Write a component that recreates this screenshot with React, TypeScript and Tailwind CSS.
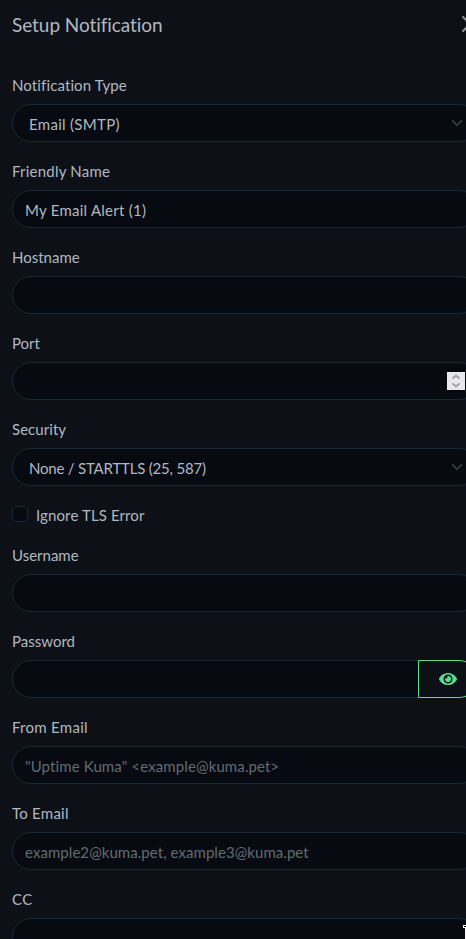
import type { ReactNode } from "react";

const field = "h-[38px] w-full rounded-[19px] border border-[#1d2634] bg-[#070a10] flex items-center";

function Field({ label, ls, children }: { label: string; ls: string; children?: ReactNode }) {
  return (
    <div className="mb-4">
      <div className="mb-2 h-6 leading-[26px]">
        <span className={ls}>{label}</span>
      </div>
      {children}
    </div>
  );
}

function Chevron() {
  return (
    <svg viewBox="0 0 16 16" className="ml-auto mr-[14px] h-3 w-3 shrink-0" fill="none" stroke="#3d434a" strokeWidth="2" strokeLinecap="round" strokeLinejoin="round">
      <path d="m2 5 6 6 6-6" />
    </svg>
  );
}

export default function App() {
  return (
    <div className="relative h-[939px] w-[466px] overflow-hidden bg-[#0d1117] font-['Lato','Liberation_Sans',sans-serif] text-[15px] text-[#b1b8c0] [font-variant-ligatures:none]">
      <div className="w-[490px] px-3">
        <header className="flex h-[72px] items-start justify-between pt-[10px]">
          <h5 className="text-[19px] leading-[29px] tracking-[-0.06px]">Setup Notification</h5>
          <svg viewBox="0 0 16 16" className="mt-[6px] h-4 w-4 shrink-0" fill="#909090">
            <path d="M.293.293a1 1 0 0 1 1.414 0L8 6.586 14.293.293a1 1 0 1 1 1.414 1.414L9.414 8l6.293 6.293a1 1 0 0 1-1.414 1.414L8 9.414l-6.293 6.293a1 1 0 0 1-1.414-1.414L6.586 8 .293 1.707a1 1 0 0 1 0-1.414z" />
          </svg>
        </header>

        <Field label="Notification Type" ls="tracking-[0.12px]">
          <div className={field + " pl-4"}>
            <span className="pt-[2px] tracking-[0.3px]">Email (SMTP)</span>
            <Chevron />
          </div>
        </Field>
        <Field label="Friendly Name" ls="tracking-[0.22px]">
          <div className={field + " pl-3"}>
            <span className="pt-[2px] tracking-[0.25px]">My Email Alert (1)</span>
          </div>
        </Field>
        <Field label="Hostname" ls="tracking-normal">
          <div className={field} />
        </Field>
        <Field label="Port" ls="tracking-normal">
          <div className={field + " justify-end pr-3"}>
            <svg viewBox="0 0 18 18" className="h-[18px] w-[18px]" fill="none" stroke="#8e8e98" strokeWidth="1.6">
              <path d="M0 0h18v18H0z" fill="#e9e9ed" stroke="none" />
              <path d="m5.5 6.5 3.5-3 3.5 3M5.5 11.500l3.500 3 3.500-3" />
            </svg>
          </div>
        </Field>
        <Field label="Security" ls="tracking-[0.05px]">
          <div className={field + " pl-4"}>
            <span className="pt-[2px] tracking-[-0.2px]">None / STARTTLS (25, 587)</span>
            <Chevron />
          </div>
        </Field>

        <div className="mb-4 flex h-6 items-start">
          <div className="mt-1 h-4 w-4 rounded-[4px] border border-[#1d2634] bg-[#070a10]" />
          <span className="ml-2 leading-[26px] tracking-[0.12px]">Ignore TLS Error</span>
        </div>

        <Field label="Username" ls="tracking-normal">
          <div className={field} />
        </Field>
        <Field label="Password" ls="tracking-normal">
          <div className="flex h-[38px]">
            <div className="flex-1 rounded-l-[19px] border border-r-0 border-[#1d2634] bg-[#070a10]" />
            <div className="flex w-[60px] items-center justify-center rounded-r-[19px] border border-[#5cdd8b]">
              <svg viewBox="0 0 576 512" className="h-4 w-[18px]" fill="#5cdd8b">
                <path d="M572.52 241.400C518.290 135.590 410.930 64 288 64S57.680 135.640 3.480 241.410a32.350 32.350 0 0 0 0 29.190C57.710 376.410 165.070 448 288 448s230.320-71.640 284.520-177.410a32.350 32.350 0 0 0 0-29.190zM288 400a144 144 0 1 1 144-144 143.930 143.930 0 0 1-144 144zm0-240a95.310 95.310 0 0 0-25.310 3.790 47.850 47.850 0 0 1-66.900 66.900A95.780 95.780 0 1 0 288 160z" />
              </svg>
            </div>
          </div>
        </Field>
        <Field label="From Email" ls="tracking-[0.28px]">
          <div className={field + " pl-3 text-[#636b73]"}>
            <span className="pt-[2px] tracking-[0.12px]">"Uptime Kuma" &lt;example@kuma.pet&gt;</span>
          </div>
        </Field>
        <Field label="To Email" ls="tracking-[0.25px]">
          <div className={field + " pl-3 text-[#636b73]"}>
            <span className="pt-[2px] tracking-[0.06px]">example2@kuma.pet, example3@kuma.pet</span>
          </div>
        </Field>
        <Field label="CC" ls="tracking-[0.5px]">
          <div className={field} />
        </Field>
      </div>

      {/* Mouse pointer, clipped by the window's edge */}
      <svg viewBox="0 0 3 14" className="absolute right-0 bottom-0 h-[14px] w-[3px]" shapeRendering="crispEdges">
        <path d="M0 0h3v3H0zM2 3h1v11H2z" fill="#fff" />
        <path d="M1 1h2v1H1z" fill="#000" />
      </svg>
    </div>
  );
}
